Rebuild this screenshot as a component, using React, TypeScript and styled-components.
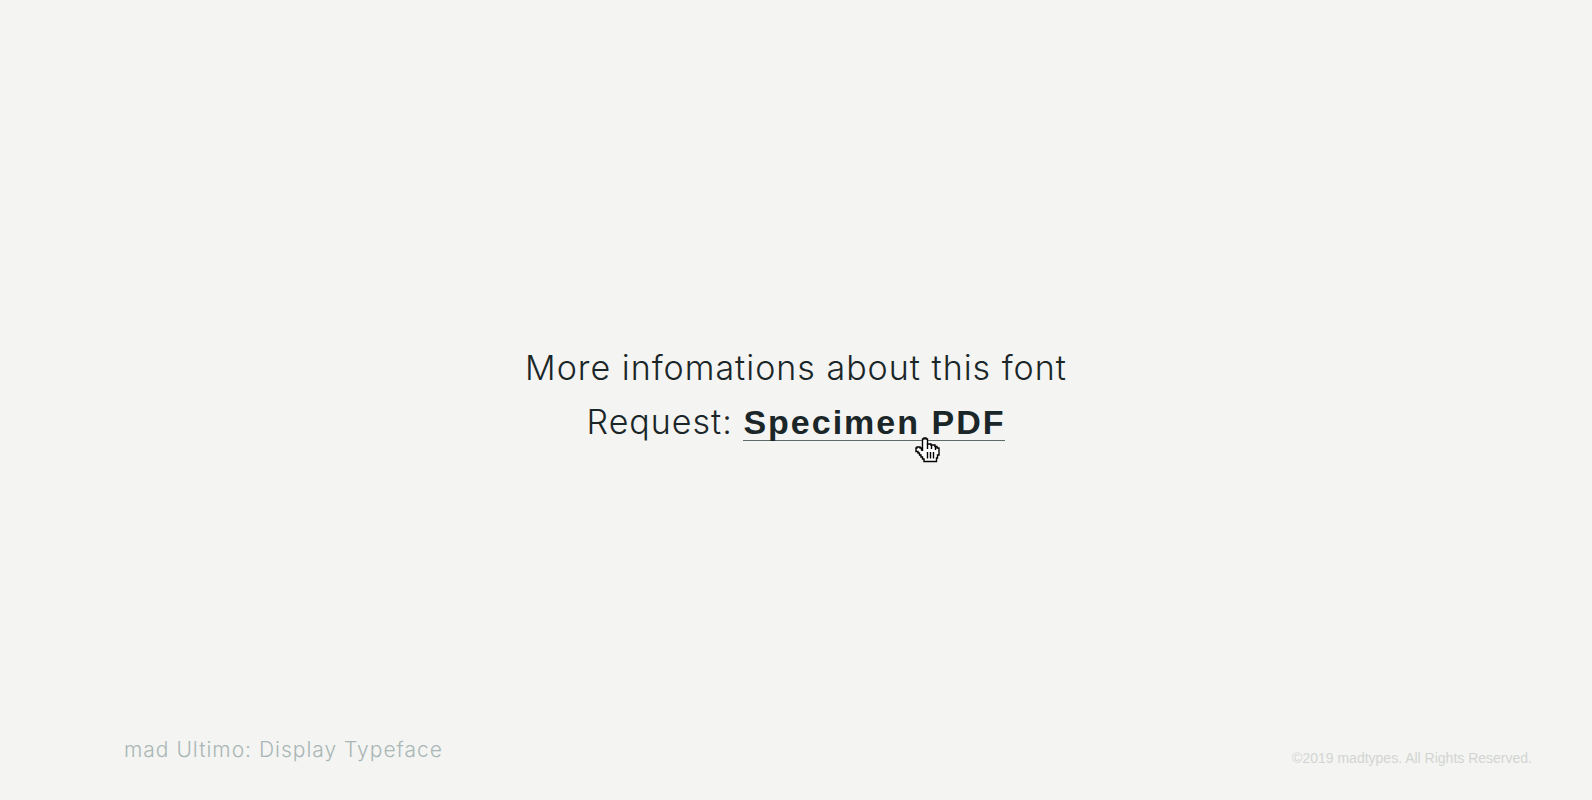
import React from "react";
import styled, { createGlobalStyle } from "styled-components";

const GlobalStyle = createGlobalStyle`
  body {
    margin: 0;
    background: #f4f4f2;
  }
`;

const Page = styled.div`
  display: grid;
  grid-template-rows: 1fr auto 1fr;
  min-height: 100vh;
  font-family: Inter, "Liberation Sans", sans-serif;
`;

const Message = styled.main`
  grid-row: 2;
  padding-bottom: 10px;
  text-align: center;
  color: #1a2628;
`;

const Line = styled.p`
  margin: 0;
  font-size: 34px;
  line-height: 54px;
  font-weight: 300;
  letter-spacing: 1px;
`;

const SpecimenLink = styled.a`
  position: relative;
  display: inline-block;
  color: inherit;
  font-family: "Liberation Sans", sans-serif;
  font-weight: 700;
  line-height: 36px;
  letter-spacing: 2px;
  text-decoration: none;
  border-bottom: 1px solid #5c6a69;
`;

const Pointer = styled.svg`
  position: absolute;
  right: 65px;
  top: 33px;
  width: 25px;
  height: 26px;
`;

const Footer = styled.footer`
  grid-row: 3;
  display: flex;
  justify-content: space-between;
  align-items: flex-end;
  padding: 0 60px 32px 124px;
`;

const FontName = styled.span`
  font-size: 21px;
  line-height: 36px;
  font-weight: 300;
  letter-spacing: 1px;
  color: #a9b7b6;
`;

const Copyright = styled.small`
  font-family: "Liberation Sans", sans-serif;
  font-size: 14px;
  line-height: 20px;
  color: #d2d5d3;
`;

export default function App() {
  return (
    <Page>
      <GlobalStyle />
      <Message>
        <Line>More infomations about this font</Line>
        <Line>
          Request:{" "}
          <SpecimenLink href="#specimen">
            Specimen PDF
            <Pointer viewBox="0 0 25 26" aria-hidden="true">
              <path
                d="M7.5 14V2H9V1H11V2H12.5V7H16V8H20V9.500H22V11H24V18H22.500V21H21.500V24.500H9V22H7.500V20H6V18H4.500V16H3V14.500H1V11H2V10H5V11H6.500V13H7.500Z"
                fill="#fff"
                stroke="#000"
                strokeWidth="1.4"
              />
              <path
                d="M12.5 7V12M16.5 8V12M20.5 9V13M12.5 15V21.500M15.5 15V21.500M18.5 15V21.500"
                fill="none"
                stroke="#000"
                strokeWidth="1.4"
              />
            </Pointer>
          </SpecimenLink>
        </Line>
      </Message>
      <Footer>
        <FontName>mad Ultimo: Display Typeface</FontName>
        <Copyright>©2019 madtypes. All Rights Reserved.</Copyright>
      </Footer>
    </Page>
  );
}
